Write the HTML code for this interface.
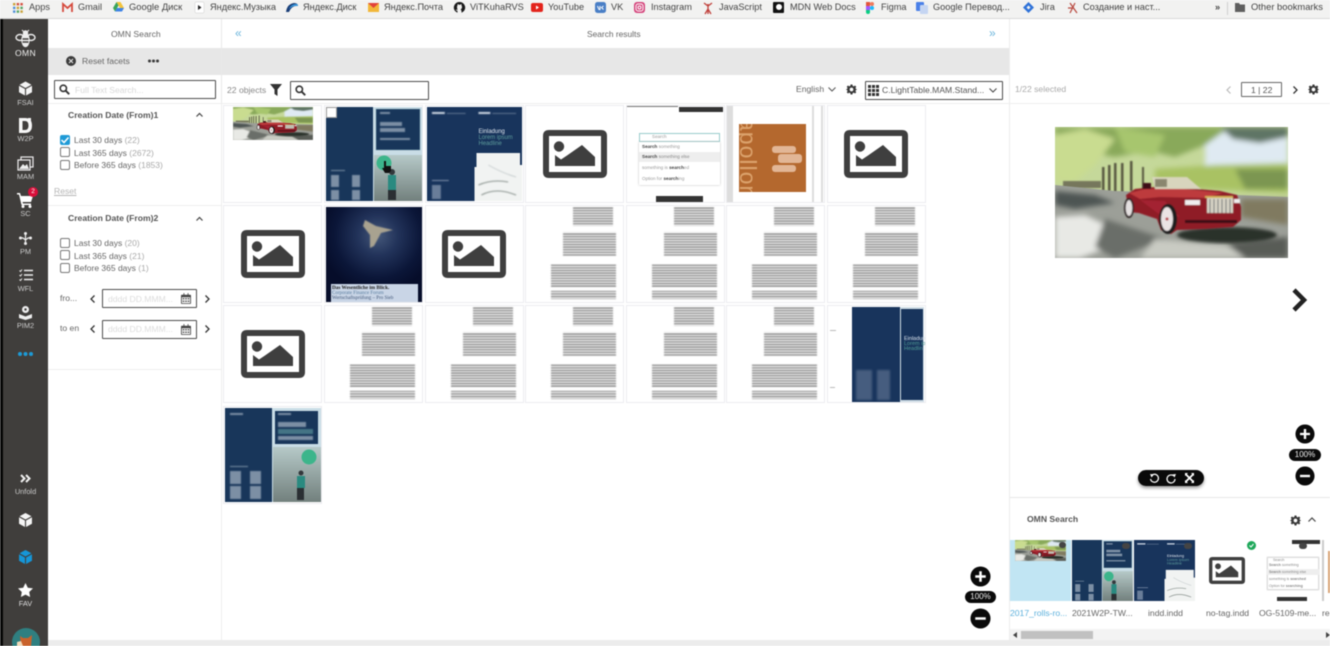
<!DOCTYPE html>
<html><head><meta charset="utf-8"><title>OMN Search</title>
<style>
html,body{margin:0;padding:0;background:#fff}
#r{position:relative;width:1330px;height:646px;overflow:hidden;background:#fff;font-family:"Liberation Sans","Noto Sans CJK SC",sans-serif;color:#555;filter:blur(.4px)}
.a,.t{position:absolute}
.t{white-space:nowrap;line-height:12px;font-size:8.6px;transform:translateY(-6px)}
.bm{font-size:9.2px;color:#444;top:7px}
.sl{color:#c9c9c9;font-size:7.4px;width:45px;left:3px;text-align:center}
.cell{position:absolute;width:99px;height:98px;box-sizing:border-box;border:1px solid #ececf0;background:#fff;overflow:hidden}
.box{position:absolute;box-sizing:border-box;border:1px solid #4c4c4c;background:#fff;border-radius:1px}
.cb{position:absolute;left:60px;width:10px;height:10px;box-sizing:border-box;border:1px solid #777;border-radius:2px;background:#fff}
.lb{left:74px;color:#666;font-size:8.5px}
.lb i{font-style:normal;color:#aaa}
.hd{color:#555;font-weight:bold;left:68px;font-size:8.6px}
svg{position:absolute;overflow:visible}
</style></head><body><div id="r">
<svg width="0" height="0" style="position:absolute">
<defs>
<filter id="b1"><feGaussianBlur stdDeviation="1.6"/></filter>
<filter id="b2"><feGaussianBlur stdDeviation=".5"/></filter>
<filter id="b3"><feGaussianBlur stdDeviation="2.6"/></filter>
<pattern id="ln" width="6" height="2.6" patternUnits="userSpaceOnUse"><rect width="6" height="1" fill="#555"/></pattern>
<radialGradient id="fal" cx=".54" cy=".3" r=".6"><stop offset="0" stop-color="#45587a"/><stop offset=".35" stop-color="#22335a"/><stop offset=".75" stop-color="#0b1638"/><stop offset="1" stop-color="#060d2a"/></radialGradient>
<linearGradient id="mt" x1="0" y1="0" x2="0" y2="1"><stop offset="0" stop-color="#b6c9c8"/><stop offset="1" stop-color="#72807d"/></linearGradient>
<symbol id="ico" viewBox="0 0 64 48"><path fill-rule="evenodd" fill="#3f3f3f" d="M6 0H58Q64 0 64 6V42Q64 48 58 48H6Q0 48 0 42V6Q0 0 6 0ZM6 6V42H58V6Z"/><circle cx="16" cy="16.5" r="5.2" fill="#3f3f3f"/><path fill="#3f3f3f" d="M12 36V25L18 29.5 24 25.5 39 15 52 27V36Z"/></symbol>
<symbol id="car" viewBox="0 0 233 131" preserveAspectRatio="none">
<rect width="233" height="131" fill="#c5d89a"/>
<g filter="url(#b3)">
<rect x="150" y="0" width="83" height="42" fill="#dfeaf2"/>
<path fill="#89a95a" d="M0 0H175L150 18 120 30 95 24 60 30 30 25 0 20Z"/>
<path fill="#c9dc90" d="M0 8 30 2 60 12 40 38 20 55H0Z"/>
<path fill="#a7c66e" d="M60 0 110 8 100 30 70 25Z"/>
<path fill="#5f7565" d="M165 0H233V10L205 16 178 12Z"/>
<path fill="#a9c263" d="M100 42 160 38 233 36V66L100 60Z"/>
<path fill="#7b9651" d="M180 42H233V62H190Z"/>
</g>
<g filter="url(#b2)" fill="#56573f"><rect x="47" y="40" width="2.500" height="24"/><rect x="53" y="38" width="2.500" height="26"/><rect x="59" y="36" width="2.500" height="30"/><rect x="66" y="36" width="2.500" height="30"/><rect x="75" y="34" width="2.500" height="30"/><rect x="87" y="40" width="2" height="24"/><rect x="8" y="54" width="38" height="7" fill="#76775c"/></g>
<path fill="#9c9f98" d="M0 58 60 64 130 66 233 70V131H0Z"/>
<g filter="url(#b3)">
<path fill="#807a61" d="M186 72H233V98L186 90Z"/>
<path fill="#e8e9e5" d="M0 90 30 88 55 100 50 122 25 131H0Z"/>
<path fill="#4e5452" d="M0 64 40 68 60 76 20 82 0 78Z"/>
<path fill="#6a6e69" d="M50 92 110 112 60 131 40 120Z"/>
<path fill="#c9cbc3" d="M100 112 190 120 233 131H85Z"/>
<path fill="#595c56" d="M170 116 233 110V131H190Z"/>
</g>
<ellipse cx="172" cy="108" rx="50" ry="8" fill="#2b302b" filter="url(#b1)"/>
<g filter="url(#b2)">
<path fill="#8f1b27" d="M71 68 80 62 100 60 130 61 165 64 182 68 186 80 186 93 178 100 150 102 122 103 116 107 106 103 102 92 84 86 74 85Z"/>
<path fill="#bd3a3c" d="M74 66 90 62 130 62 168 66 150 71 105 70 85 72Z"/>
<path fill="#a32230" d="M85 73 110 74 125 90 105 88Z"/>
<path fill="#d8d5bd" d="M97 50H132L146 62H100Z"/>
<path fill="#89866e" d="M100 52H112V60H100Z"/>
<rect x="88" y="56" width="8" height="6" fill="#3d1014"/>
<path fill="#d9d6c8" d="M152 71H178V86H152Z"/>
<path stroke="#6d6d6d" stroke-width="1.100" d="M155 72V86M159 72V86M163 72V86M167 72V86M171 72V86M175 72V86"/>
<rect x="150" y="69" width="28" height="2" fill="#d5b456"/>
<rect x="130" y="73" width="15" height="5" fill="#f0eeee"/>
<rect x="179" y="72" width="6" height="4" fill="#f0eeee"/>
<rect x="130" y="93" width="52" height="3" fill="#3a1014"/>
<ellipse cx="74" cy="81" rx="5" ry="10" fill="#2a2020"/><ellipse cx="74" cy="81" rx="3.400" ry="8" fill="#e4e0e0"/>
<ellipse cx="113" cy="92" rx="9" ry="15" fill="#1d1a1a"/><ellipse cx="112" cy="92" rx="6" ry="12" fill="#eae3e3"/><circle cx="112" cy="92" r="1.500" fill="#b3303a"/>
</g>
</symbol>
<symbol id="doc" viewBox="0 0 99 98"><g fill="url(#ln)" filter="url(#b2)"><rect x="48" y="2" width="40" height="19"/><rect x="38" y="27" width="53" height="25"/><rect x="26" y="59" width="65" height="23"/><rect x="26" y="86" width="65" height="8"/></g></symbol>
<symbol id="leg" viewBox="0 0 96 94" preserveAspectRatio="none"><rect width="96" height="94" fill="#c9dde6"/><rect width="47" height="94" fill="#18365a"/><rect x="50" y="2" width="44" height="41" fill="#18365a" stroke="#7ea0b0" stroke-width=".5"/><rect x="48" y="48" width="48" height="46" fill="url(#mt)"/><circle cx="58" cy="56" r="7.500" fill="#3cb58b"/><path fill="#2a8a80" d="M62 68H70V83H62Z"/><path fill="#2a2f33" d="M62 83H70V93H62Z"/><circle cx="66" cy="65" r="3" fill="#33383c"/><g fill="#dfe7ee" filter="url(#b2)" opacity=".5"><rect x="5" y="63" width="14" height="1"/><rect x="5" y="68" width="8" height="12"/><rect x="26" y="68" width="8" height="12"/><rect x="5" y="83" width="8" height="10"/><rect x="26" y="83" width="8" height="10"/><rect x="54" y="15" width="22" height="4"/><rect x="54" y="21" width="25" height="4"/><rect x="54" y="31" width="30" height="2"/><rect x="54" y="5" width="10" height="2"/></g></symbol>
<symbol id="leg2" viewBox="0 0 96 94" preserveAspectRatio="none"><rect width="96" height="94" fill="#c9dde6"/><rect width="47" height="94" fill="#18365a"/><rect x="50" y="3" width="43" height="33" fill="#18365a"/><rect x="48" y="39" width="48" height="55" fill="url(#mt)"/><circle cx="84" cy="49" r="7.500" fill="#3cb58b"/><path fill="#2a8a80" d="M72 68H80V80H72Z"/><path fill="#2a2f33" d="M72 80H79V92H72Z"/><circle cx="76" cy="65" r="2.500" fill="#33383c"/><g fill="#dfe7ee" filter="url(#b2)" opacity=".5"><rect x="5" y="5" width="13" height="2"/><rect x="53" y="5" width="13" height="2"/><rect x="5" y="58" width="18" height="1"/><rect x="5" y="63" width="11" height="13"/><rect x="25" y="63" width="11" height="13"/><rect x="5" y="78" width="11" height="13"/><rect x="25" y="78" width="11" height="13"/><rect x="53" y="14" width="28" height="5"/><rect x="53" y="21" width="35" height="5" fill="#6fb3b0"/><rect x="53" y="28" width="35" height="4"/></g></symbol>
<symbol id="d2" viewBox="0 0 96 94" preserveAspectRatio="none"><rect width="96" height="94" fill="#18345c"/><g fill="#cdd6e2" filter="url(#b2)"><rect x="5" y="5" width="13" height="2"/><rect x="52" y="5" width="12" height="2"/><rect x="20" y="6" width="19" height=".8" opacity=".5"/><rect x="66" y="6" width="24" height=".8" opacity=".5"/><rect x="5" y="73" width="17" height="1" opacity=".6"/><rect x="5" y="78" width="9" height="14" opacity=".45"/></g><text x="52" y="26" font-size="6" fill="#dfe6ee">Einladung</text><text x="52" y="32" font-size="6" fill="#5d9b9b">Lorem ipsum</text><text x="52" y="38" font-size="6" fill="#5d9b9b">Headline</text><path fill="#f1f3f2" d="M48 60H50V46H94V58H96V94H48Z"/><g filter="url(#b2)" fill="none" stroke="#8b9490"><path d="M55 88Q70 80 90 88"/><path d="M52 78Q66 72 82 75"/><path d="M62 58Q76 66 90 70" stroke="#c9cfd0"/></g></symbol>
<symbol id="gear" viewBox="0 0 24 24"><path fill="#3a3a3a" d="M10 1H14L14.6 4.1 17 5.1 19.6 3.3 22.4 6.1 20.6 8.7 21.7 11 24 11.6V12.4L21.7 13 20.6 15.3 22.4 17.9 19.6 20.7 17 18.9 14.6 19.9 14 23H10L9.4 19.9 7 18.9 4.4 20.7 1.6 17.9 3.4 15.3 2.3 13 0 12.4V11.6L2.3 11 3.4 8.7 1.6 6.1 4.4 3.3 7 5.1 9.4 4.1ZM12 8A4 4 0 1 0 12 16 4 4 0 0 0 12 8Z" fill-rule="evenodd"/></symbol>
<symbol id="cube" viewBox="0 0 24 26"><path fill="currentColor" d="M12 0 23 6 12 12 1 6ZM0 8 11 14V26L0 20ZM24 8 13 14V26L24 20Z"/></symbol>
<symbol id="mag" viewBox="0 0 14 14"><circle cx="5.5" cy="5.5" r="4" fill="none" stroke="#333" stroke-width="2"/><path d="M8.5 8.5 13 13" stroke="#333" stroke-width="2.4"/></symbol>
<symbol id="cal" viewBox="0 0 12 13"><path fill-rule="evenodd" fill="#444" d="M1 2H3V0H4V2H8V0H9V2H11Q12 2 12 3V12Q12 13 11 13H1Q0 13 0 12V3Q0 2 1 2ZM1 5V12H11V5Z"/><path fill="#444" d="M2 6H4V7.5H2ZM5 6H7V7.5H5ZM8 6H10V7.5H8ZM2 9H4V10.5H2ZM5 9H7V10.5H5ZM8 9H10V10.5H8Z"/></symbol>
<symbol id="plus" viewBox="0 0 22 22"><circle cx="11" cy="11" r="10.5" fill="#0a0a0a"/><path d="M5.5 11H16.5M11 5.5V16.5" stroke="#fff" stroke-width="2.6"/></symbol>
<symbol id="minus" viewBox="0 0 22 22"><circle cx="11" cy="11" r="10.5" fill="#0a0a0a"/><path d="M5.5 11H16.5" stroke="#fff" stroke-width="2.6"/></symbol>
</defs></svg>

<!-- bookmarks bar -->
<div class="a" style="left:0;top:0;width:1330px;height:18px;background:#f2f2f1;border-bottom:1px solid #d9d9d9"></div>
<svg style="left:13px;top:3px" width="10" height="10" viewBox="0 0 10 10"><g fill="#c9a33a"><rect width="2.4" height="2.4"/><rect x="3.7" width="2.4" height="2.4" fill="#d5503f"/><rect x="7.4" width="2.4" height="2.4" fill="#d5503f"/><rect y="3.7" width="2.4" height="2.4" fill="#4f8fd8"/><rect x="3.7" y="3.7" width="2.4" height="2.4"/><rect x="7.4" y="3.7" width="2.4" height="2.4" fill="#55a565"/><rect y="7.4" width="2.4" height="2.4" fill="#4f8fd8"/><rect x="3.7" y="7.4" width="2.4" height="2.4" fill="#55a565"/><rect x="7.4" y="7.4" width="2.4" height="2.4"/></g></svg>
<span class="t bm" style="left:29px">Apps</span>
<svg style="left:62px;top:3px" width="11" height="9" viewBox="0 0 11 9"><path d="M1 9V1L5.500 5 10 1V9" fill="none" stroke="#d5493c" stroke-width="1.800"/></svg>
<span class="t bm" style="left:78px">Gmail</span>
<svg style="left:113px;top:2px" width="11" height="10" viewBox="0 0 11 10"><path fill="#f3c33a" d="M3.500 0H7.500L11 6H7Z"/><path fill="#3aa55a" d="M3.500 0 0 6 2 9.500 5.500 3.500Z"/><path fill="#3f83e6" d="M2 9.500H9L11 6H4Z"/></svg>
<span class="t bm" style="left:129px;font-size:9.400px">Google Диск</span>
<svg style="left:195px;top:2px" width="9" height="11" viewBox="0 0 9 11"><rect width="9" height="11" rx="1" fill="#fff" stroke="#ccc" stroke-width=".5"/><path d="M3 3 6.500 5.500 3 8Z" fill="#222"/></svg>
<span class="t bm" style="left:210px">Яндекс.Музыка</span>
<svg style="left:286px;top:3px" width="12" height="9" viewBox="0 0 12 9"><path fill="#1b3f78" d="M0 9Q1 1 8 0 12 0 12 3 6 2 3 9Z"/><path fill="#39a0e8" d="M3 6Q5 1 11 1 12 2 12 3 7 2 3 6Z"/></svg>
<span class="t bm" style="left:303px">Яндекс.Диск</span>
<svg style="left:368px;top:3px" width="11" height="9" viewBox="0 0 11 9"><rect width="11" height="9" fill="#f2b73a"/><path d="M0 0 5.500 5 11 0Z" fill="#e2423a"/></svg>
<span class="t bm" style="left:384px">Яндекс.Почта</span>
<svg style="left:454px;top:2px" width="11" height="11" viewBox="0 0 11 11"><path fill="#1a1a1a" fill-rule="evenodd" d="M5.500 0A5.500 5.500 0 0 0 3.500 10.700V8.800Q2 8.800 1.800 7.500 3 7.800 3.600 8 3 6 3 5 3 4 3.500 3.500V2L5 2.700H6L7.500 2V3.500Q8 4 8 5 8 6.800 6.500 7.500 7.500 8 7.500 9V10.700A5.500 5.500 0 0 0 5.500 0Z"/></svg>
<span class="t bm" style="left:470px">ViTKuhaRVS</span>
<svg style="left:531px;top:3px" width="12" height="9" viewBox="0 0 12 9"><rect width="12" height="9" rx="2" fill="#e3241c"/><path d="M5 2.500 8 4.500 5 6.500Z" fill="#fff"/></svg>
<span class="t bm" style="left:548px">YouTube</span>
<svg style="left:595px;top:2px" width="11" height="11" viewBox="0 0 11 11"><rect width="11" height="11" rx="2.500" fill="#4a7fc6"/><path d="M2.500 4 4 7.500H5V4M8.500 4 6.500 5.500 8.500 7.500" stroke="#fff" fill="none"/></svg>
<span class="t bm" style="left:611px">VK</span>
<svg style="left:634px;top:2px" width="11" height="11" viewBox="0 0 11 11"><rect width="11" height="11" rx="3" fill="#d4457c"/><rect x="2" y="2" width="7" height="7" rx="2" fill="none" stroke="#fff"/><circle cx="5.500" cy="5.500" r="1.500" fill="none" stroke="#fff"/></svg>
<span class="t bm" style="left:651px">Instagram</span>
<svg style="left:703px;top:2px" width="10" height="12" viewBox="0 0 10 12"><path d="M5 2V12M2 12 5 7 8 12M1 1 5 4 9 1" stroke="#c0413c" fill="none" stroke-width="1.300"/></svg>
<span class="t bm" style="left:719px">JavaScript</span>
<div class="a" style="left:773px;top:2px;width:11px;height:11px;background:#111;border-radius:1px"></div>
<div class="a" style="left:776px;top:4px;width:6px;height:6px;background:#fff;border-radius:50%"></div>
<span class="t bm" style="left:790px">MDN Web Docs</span>
<svg style="left:866px;top:2px" width="8" height="12" viewBox="0 0 8 12"><rect width="4" height="4" fill="#e2553c"/><rect x="4" width="4" height="4" rx="2" fill="#f07a5c"/><rect y="4" width="4" height="4" fill="#a259ff"/><circle cx="6" cy="6" r="2" fill="#1abcfe"/><path d="M0 8H4V10A2 2 0 0 1 0 10Z" fill="#0acf83"/></svg>
<span class="t bm" style="left:881px">Figma</span>
<svg style="left:916px;top:2px" width="12" height="12" viewBox="0 0 12 12"><rect width="8" height="9" rx="1" fill="#4a80e8"/><rect x="4" y="3" width="8" height="9" rx="1" fill="#c5d5f2"/></svg>
<span class="t bm" style="left:933px">Google Перевод...</span>
<svg style="left:1023px;top:2px" width="11" height="11" viewBox="0 0 11 11"><path fill="#2f72d8" fill-rule="evenodd" d="M5.500 0 11 5.500 5.500 11 0 5.500ZM5.500 3.500 3.500 5.500 5.500 7.500 7.500 5.500Z"/></svg>
<span class="t bm" style="left:1040px">Jira</span>
<svg style="left:1068px;top:2px" width="11" height="12" viewBox="0 0 11 12"><path d="M2 1 9 11M7 1 2 11M0 6H5" stroke="#b8483f" fill="none" stroke-width="1.200"/></svg>
<span class="t bm" style="left:1083px">Создание и наст...</span>
<span class="t bm" style="left:1215px;font-weight:bold">»</span>
<div class="a" style="left:1227px;top:2px;width:1px;height:13px;background:#cfcfcf"></div>
<svg style="left:1235px;top:3px" width="10" height="9" viewBox="0 0 10 9"><path fill="#5f5f5f" d="M0 0H4L5 1.500H10V9H0Z"/></svg>
<span class="t bm" style="left:1251px;font-size:9.400px">Other bookmarks</span>

<!-- sidebar -->
<div class="a" style="left:0;top:19px;width:3px;height:627px;background:#060606"></div>
<div class="a" style="left:3px;top:19px;width:45px;height:627px;background:#403e3c"></div>
<svg style="left:15px;top:30px" width="21" height="19" viewBox="0 0 21 19" fill="none" stroke="#eee" stroke-width="1.400"><ellipse cx="5" cy="7.500" rx="4" ry="3"/><ellipse cx="16" cy="7.500" rx="4" ry="3"/><ellipse cx="10.500" cy="10" rx="3.500" ry="6.500" fill="#eee"/><circle cx="10.500" cy="3" r="2" fill="#eee"/><path d="M7 0 9 2M14 0 12 2" stroke-width="1"/><path d="M7.500 9H13.500M7.500 12H13.500" stroke="#403e3c"/></svg>
<span class="t sl" style="top:53px;color:#eee;font-size:8.6px;letter-spacing:.3px">OMN</span>
<svg style="left:19px;top:81px;color:#f4f4f4" width="13" height="15"><use href="#cube"/></svg>
<span class="t sl" style="top:103px">FSAI</span>
<svg style="left:19px;top:118px" width="13" height="15" viewBox="0 0 13 15"><path fill-rule="evenodd" fill="#f6f6f6" d="M0 0H6Q13 0 13 7.500 13 15 6 15H0ZM3.500 3V12H6Q9.500 12 9.500 7.500 9.500 3 6 3Z"/><rect x="9" y="0" width="3" height="3" fill="#f6f6f6"/></svg>
<span class="t sl" style="top:139px">W2P</span>
<svg style="left:18px;top:157px" width="15" height="13" viewBox="0 0 15 13"><rect x="3" y="0" width="12" height="10" fill="none" stroke="#eee" stroke-width="1.200"/><rect x="0" y="3" width="12" height="10" fill="#403e3c" stroke="#eee" stroke-width="1.200"/><path fill="#eee" d="M1 12 5 7 7 9 9 7 11 12Z"/></svg>
<span class="t sl" style="top:177px">MAM</span>
<svg style="left:17px;top:193px" width="16" height="15" viewBox="0 0 16 15"><path fill="#fff" d="M0 0H3L4 3H16L14 9H5.500L6 10.500H14V12H4.500L2 1.500H0Z"/><circle cx="6" cy="13.500" r="1.500" fill="#fff"/><circle cx="13" cy="13.500" r="1.500" fill="#fff"/></svg>
<div class="a" style="left:28px;top:187px;width:10px;height:10px;background:#d80f3a;border-radius:50%;color:#fff;font-size:6.500px;line-height:10px;text-align:center">2</div>
<span class="t sl" style="top:214px">SC</span>
<svg style="left:19px;top:232px" width="13" height="13" viewBox="0 0 13 13"><g stroke="#eee" stroke-width="1.200" fill="none"><path d="M6.500 2V11M1.500 6H4L6.500 8 9 6H11.500"/></g><g fill="#eee"><circle cx="6.500" cy="1.500" r="1.500"/><circle cx="1.500" cy="6" r="1.500"/><circle cx="11.500" cy="6" r="1.500"/><circle cx="6.500" cy="11.500" r="1.500"/></g></svg>
<span class="t sl" style="top:252px">PM</span>
<svg style="left:19px;top:269px" width="14" height="12" viewBox="0 0 14 12"><g stroke="#eee" stroke-width="1.500" fill="none"><path d="M5 1.500H14M5 6H14M5 10.500H14"/><path d="M.5 1.500 1.500 2.500 3 .5M.5 6 1.500 7 3 5M.5 10.500 1.500 11.500 3 9.500" stroke-width="1"/></g></svg>
<span class="t sl" style="top:289px">WFL</span>
<svg style="left:19px;top:306px" width="13" height="14" viewBox="0 0 13 14"><circle cx="6.500" cy="3.500" r="3.500" fill="#eee"/><path fill="#eee" d="M0 8 6.500 10.500 13 8V12L6.500 14 0 12Z"/><circle cx="6.500" cy="3.500" r="1.200" fill="#403e3c"/></svg>
<span class="t sl" style="top:326px">PIM2</span>
<svg style="left:18px;top:352px" width="15" height="4" viewBox="0 0 15 4"><g fill="#1d9ad6"><circle cx="2" cy="2" r="2"/><circle cx="7.500" cy="2" r="2"/><circle cx="13" cy="2" r="2"/></g></svg>
<svg style="left:20px;top:474px" width="11" height="9" viewBox="0 0 11 9"><path d="M1 1 4.500 4.500 1 8M6 1 9.500 4.500 6 8" fill="none" stroke="#f2f2f2" stroke-width="2"/></svg>
<span class="t sl" style="top:492px">Unfold</span>
<svg style="left:19px;top:513px;color:#f4f4f4" width="13" height="14"><use href="#cube"/></svg>
<svg style="left:19px;top:550px;color:#1596d8" width="13" height="14"><use href="#cube"/></svg>
<svg style="left:18px;top:583px" width="15" height="14" viewBox="0 0 15 14"><path fill="#fff" d="M7.500 0 9.800 4.700 15 5.400 11.200 9 12.100 14 7.500 11.600 2.900 14 3.800 9 0 5.400 5.200 4.700Z"/></svg>
<span class="t sl" style="top:604px;color:#ddd">FAV</span>
<div class="a" style="left:12px;top:628px;width:28px;height:28px;background:#2f7f80;border-radius:50%"></div>
<svg style="left:17px;top:634px" width="18" height="12" viewBox="0 0 18 12"><path fill="#c9622c" d="M3 2 6 4H11L15 1 14 12H4Z"/><path fill="#f0d9b8" d="M0 12V8L4 7 6 12Z"/></svg>

<!-- headers -->
<span class="t" style="left:111px;top:34px;color:#666">OMN Search</span>
<span class="t" style="left:587px;top:34px;color:#666;font-size:8.400px">Search results</span>
<span class="t" style="left:235px;top:33px;color:#6cb5dc;font-size:12px">«</span>
<span class="t" style="left:989px;top:33px;color:#6cb5dc;font-size:12px">»</span>
<div class="a" style="left:48px;top:48px;width:962px;height:27px;background:#e7e7e7"></div>
<div class="a" style="left:221px;top:19px;width:1px;height:84px;background:#e8e8e8"></div>
<div class="a" style="left:1009px;top:19px;width:1px;height:621px;background:#ececec"></div>
<div class="a" style="left:48px;top:103px;width:1282px;height:1px;background:#eee"></div>
<div class="a" style="left:221px;top:103px;width:1px;height:537px;background:#eee"></div>

<!-- left panel -->
<div class="a" style="left:66px;top:56px;width:10px;height:10px;border-radius:50%;background:#3c3c3c"></div>
<svg style="left:69px;top:59px" width="4" height="4" viewBox="0 0 4 4"><path d="M0 0 4 4M4 0 0 4" stroke="#eee"/></svg>
<span class="t" style="left:82px;top:61px;color:#666">Reset facets</span>
<svg style="left:148px;top:59px" width="11" height="4" viewBox="0 0 11 4"><g fill="#3a3a3a"><circle cx="1.500" cy="2" r="1.500"/><circle cx="5.500" cy="2" r="1.500"/><circle cx="9.500" cy="2" r="1.500"/></g></svg>
<div class="box" style="left:54px;top:80px;width:162px;height:19px"></div>
<svg style="left:59px;top:84px" width="11" height="11"><use href="#mag"/></svg>
<span class="t" style="left:75px;top:90px;color:#d8d8d8">Full Text Search...</span>

<span class="t hd" style="top:115px">Creation Date (From)1</span>
<svg style="left:196px;top:113px" width="7" height="4" viewBox="0 0 7 4"><path d="M.5 3.500 3.500 .5 6.500 3.500" fill="none" stroke="#444" stroke-width="1.200"/></svg>
<div class="cb" style="top:135px;background:#1f9ad6;border-color:#1f9ad6"></div>
<svg style="left:61px;top:137px" width="8" height="6" viewBox="0 0 8 6"><path d="M.5 3 3 5.500 7.500 .5" fill="none" stroke="#fff" stroke-width="1.500"/></svg>
<span class="t lb" style="top:140px">Last 30 days <i>(22)</i></span>
<div class="cb" style="top:147px"></div>
<span class="t lb" style="top:153px">Last 365 days <i>(2672)</i></span>
<div class="cb" style="top:160px"></div>
<span class="t lb" style="top:165px">Before 365 days <i>(1853)</i></span>
<span class="t" style="left:54px;top:191px;color:#b5b5b5;text-decoration:underline">Reset</span>
<div class="a" style="left:48px;top:205px;width:173px;height:1px;background:#eee"></div>

<span class="t hd" style="top:218px">Creation Date (From)2</span>
<svg style="left:196px;top:217px" width="7" height="4" viewBox="0 0 7 4"><path d="M.5 3.500 3.500 .5 6.500 3.500" fill="none" stroke="#444" stroke-width="1.200"/></svg>
<div class="cb" style="top:238px"></div>
<span class="t lb" style="top:243px">Last 30 days <i>(20)</i></span>
<div class="cb" style="top:250px"></div>
<span class="t lb" style="top:256px">Last 365 days <i>(21)</i></span>
<div class="cb" style="top:263px"></div>
<span class="t lb" style="top:268px">Before 365 days <i>(1)</i></span>
<span class="t" style="left:60px;top:298px;color:#666">fro...</span>
<svg style="left:90px;top:295px" width="5" height="8" viewBox="0 0 5 8"><path d="M4.500 .5 1 4 4.500 7.500" fill="none" stroke="#333" stroke-width="1.300"/></svg>
<div class="box" style="left:102px;top:289px;width:95px;height:19px"></div>
<span class="t" style="left:108px;top:299px;color:#ddd">dddd DD.MMM...</span>
<svg style="left:181px;top:293px" width="10" height="11"><use href="#cal"/></svg>
<svg style="left:205px;top:295px" width="5" height="8" viewBox="0 0 5 8"><path d="M.5 .5 4 4 .5 7.500" fill="none" stroke="#333" stroke-width="1.300"/></svg>
<span class="t" style="left:60px;top:328px;color:#666">to en</span>
<svg style="left:90px;top:325px" width="5" height="8" viewBox="0 0 5 8"><path d="M4.500 .5 1 4 4.500 7.500" fill="none" stroke="#333" stroke-width="1.300"/></svg>
<div class="box" style="left:102px;top:320px;width:95px;height:19px"></div>
<span class="t" style="left:108px;top:329px;color:#ddd">dddd DD.MMM...</span>
<svg style="left:181px;top:324px" width="10" height="11"><use href="#cal"/></svg>
<svg style="left:205px;top:325px" width="5" height="8" viewBox="0 0 5 8"><path d="M.5 .5 4 4 .5 7.500" fill="none" stroke="#333" stroke-width="1.300"/></svg>
<div class="a" style="left:48px;top:369px;width:173px;height:1px;background:#eee"></div>

<!-- toolbar -->
<span class="t" style="left:227px;top:90px;color:#888">22 objects</span>
<svg style="left:270px;top:84px" width="12" height="12" viewBox="0 0 12 12"><path fill="#333" d="M0 0H12L7.500 5.500V12L4.500 10V5.500Z"/></svg>
<div class="box" style="left:290px;top:81px;width:139px;height:19px"></div>
<svg style="left:295px;top:85px" width="11" height="11"><use href="#mag"/></svg>
<span class="t" style="left:796px;top:89px;color:#666">English</span>
<svg style="left:828px;top:87px" width="8" height="5" viewBox="0 0 8 5"><path d="M.5 .5 4 4 7.500 .5" fill="none" stroke="#555" stroke-width="1"/></svg>
<svg style="left:846px;top:84px" width="11" height="11"><use href="#gear"/></svg>
<div class="box" style="left:865px;top:81px;width:138px;height:19px"></div>
<svg style="left:868px;top:85px" width="11" height="11" viewBox="0 0 11 11"><g fill="#333"><rect width="3" height="3"/><rect x="4" width="3" height="3"/><rect x="8" width="3" height="3"/><rect y="4" width="3" height="3"/><rect x="4" y="4" width="3" height="3"/><rect x="8" y="4" width="3" height="3"/><rect y="8" width="3" height="3"/><rect x="4" y="8" width="3" height="3"/><rect x="8" y="8" width="3" height="3"/></g></svg>
<span class="t" style="left:882px;top:90px;color:#555">C.LightTable.MAM.Stand...</span>
<svg style="left:989px;top:88px" width="8" height="5" viewBox="0 0 8 5"><path d="M.5 .5 4 4 7.500 .5" fill="none" stroke="#444" stroke-width="1"/></svg>
<span class="t" style="left:1015px;top:89px;color:#aaa">1/22 selected</span>
<svg style="left:1226px;top:86px" width="5" height="8" viewBox="0 0 5 8"><path d="M4.500 .5 1 4 4.500 7.500" fill="none" stroke="#bbb" stroke-width="1.200"/></svg>
<div class="box" style="left:1241px;top:82px;width:41px;height:15px;border-color:#666"></div>
<span class="t" style="left:1251px;top:90px;color:#555">1 | 22</span>
<svg style="left:1293px;top:86px" width="5" height="8" viewBox="0 0 5 8"><path d="M.5 .5 4 4 .5 7.500" fill="none" stroke="#333" stroke-width="1.300"/></svg>
<svg style="left:1308px;top:84px" width="11" height="11"><use href="#gear"/></svg>

<!-- grid row 1 -->
<div class="cell" style="left:223px;top:105px"><svg style="left:9px;top:1px" width="80" height="33"><use href="#car" width="80" height="33"/></svg></div>
<div class="cell" style="left:324px;top:105px"><svg style="left:1px;top:1px" width="96" height="94"><use href="#leg" width="96" height="94"/></svg><div class="a" style="left:1px;top:1px;width:9px;height:9px;background:#fff;border:1px solid #999"></div></div>
<svg style="left:382px;top:161px" width="9" height="12" viewBox="0 0 9 12"><path fill="#111" d="M2 0H4V5H9V10L7 12H3L0 7 2 7Z"/></svg>
<div class="cell" style="left:425px;top:105px"><svg style="left:1px;top:1px" width="95" height="94"><use href="#d2" width="95" height="94"/></svg></div>
<div class="cell" style="left:525px;top:105px"><svg style="left:17px;top:24px" width="64" height="48"><use href="#ico"/></svg></div>
<div class="cell" style="left:626px;top:105px">
 <div class="a" style="left:0;top:0;width:51px;height:1px;background:#777"></div>
 <div class="a" style="left:52px;top:1px;width:44px;height:5px;background:#333"></div>
 <div class="a" style="left:12px;top:27px;width:81px;height:9px;box-sizing:border-box;border:1px solid #9cc;background:#fff"></div>
 <span class="t" style="left:25px;top:31px;font-size:4.600px;color:#999">Search</span>
 <div class="a" style="left:12px;top:36px;width:81px;height:43px;background:#fff;box-shadow:0 0 2px #bbb"></div>
 <div class="a" style="left:12px;top:46px;width:81px;height:10px;background:#eee"></div>
 <span class="t" style="left:15px;top:41px;font-size:4.600px;color:#999"><b style="color:#444">Search</b> something</span>
 <span class="t" style="left:15px;top:51px;font-size:4.600px;color:#888"><b style="color:#444">Search</b> something else</span>
 <span class="t" style="left:15px;top:62px;font-size:4.600px;color:#999">something is <b style="color:#444">search</b>ed</span>
 <span class="t" style="left:15px;top:73px;font-size:4.600px;color:#999">Option for <b style="color:#444">search</b>ing</span>
 <div class="a" style="left:29px;top:90px;width:47px;height:8px;background:#333"></div>
</div>
<div class="cell" style="left:726px;top:105px">
 <div class="a" style="left:0;top:0;width:6px;height:96px;background:#ddd"></div>
 <div class="a" style="left:85px;top:0;width:2px;height:96px;background:#ddd"></div>
 <div class="a" style="left:94px;top:0;width:2px;height:96px;background:#ddd"></div>
 <div class="a" style="left:12px;top:18px;width:67px;height:68px;background:#b4682e;overflow:hidden">
  <span class="a" style="left:-3px;top:-6px;writing-mode:vertical-rl;font-size:23px;line-height:24px;color:#dba26c;letter-spacing:1px;white-space:nowrap">apollon</span>
  <div class="a" style="left:33px;top:22px;width:24px;height:7px;background:#e2b696;border-radius:3px"></div>
  <div class="a" style="left:39px;top:30px;width:24px;height:9px;background:#e2b696;border-radius:3px"></div>
  <div class="a" style="left:33px;top:41px;width:24px;height:7px;background:#e2b696;border-radius:3px"></div>
 </div>
</div>
<div class="cell" style="left:827px;top:105px"><svg style="left:16px;top:24px" width="64" height="48"><use href="#ico"/></svg></div>

<!-- row 2 -->
<div class="cell" style="left:223px;top:205px"><svg style="left:17px;top:24px" width="64" height="48"><use href="#ico"/></svg></div>
<div class="cell" style="left:324px;top:205px">
 <svg style="left:1px;top:1px" width="96" height="95" viewBox="0 0 96 95"><rect width="96" height="95" fill="url(#fal)"/><path fill="#a8a290" filter="url(#b2)" d="M39 13 50 19 67 23 55 26 48 39 44 41 44 28 37 19Z"/><rect x="5" y="77" width="87" height="18" fill="#c9d5e6"/></svg>
 <span class="t" style="left:7px;top:82px;font:bold 5.200px 'Liberation Serif',serif;color:#222;transform:none;margin-top:-3px">Das Wesentliche im Blick.</span>
 <span class="t" style="left:7px;top:88px;font:5px 'Liberation Serif',serif;color:#5a7ea0;transform:none;margin-top:-3px">Corporate Finance Forum</span>
 <span class="t" style="left:7px;top:93px;font:5px 'Liberation Serif',serif;color:#44597a;transform:none;margin-top:-3px">Wertschaftsprüfung – Pro Sieb</span>
</div>
<div class="cell" style="left:425px;top:205px"><svg style="left:16px;top:24px" width="64" height="48"><use href="#ico"/></svg></div>
<div class="cell" style="left:525px;top:205px"><svg width="99" height="98" style="left:-1px;top:-1px"><use href="#doc" width="99" height="98"/></svg></div>
<div class="cell" style="left:626px;top:205px"><svg width="99" height="98" style="left:-1px;top:-1px"><use href="#doc" width="99" height="98"/></svg></div>
<div class="cell" style="left:726px;top:205px"><svg width="99" height="98" style="left:-1px;top:-1px"><use href="#doc" width="99" height="98"/></svg></div>
<div class="cell" style="left:827px;top:205px"><svg width="99" height="98" style="left:-1px;top:-1px"><use href="#doc" width="99" height="98"/></svg></div>

<!-- row 3 -->
<div class="cell" style="left:223px;top:305px"><svg style="left:17px;top:24px" width="64" height="48"><use href="#ico"/></svg></div>
<div class="cell" style="left:324px;top:305px"><svg width="99" height="98" style="left:-1px;top:-1px"><use href="#doc" width="99" height="98"/></svg></div>
<div class="cell" style="left:425px;top:305px"><svg width="99" height="98" style="left:-1px;top:-1px"><use href="#doc" width="99" height="98"/></svg></div>
<div class="cell" style="left:525px;top:305px"><svg width="99" height="98" style="left:-1px;top:-1px"><use href="#doc" width="99" height="98"/></svg></div>
<div class="cell" style="left:626px;top:305px"><svg width="99" height="98" style="left:-1px;top:-1px"><use href="#doc" width="99" height="98"/></svg></div>
<div class="cell" style="left:726px;top:305px"><svg width="99" height="98" style="left:-1px;top:-1px"><use href="#doc" width="99" height="98"/></svg></div>
<div class="cell" style="left:827px;top:305px">
 <div class="a" style="left:24px;top:1px;width:48px;height:95px;background:#18345c"></div>
 <div class="a" style="left:72px;top:1px;width:24px;height:95px;background:#cfdde6"></div>
 <div class="a" style="left:73px;top:3px;width:22px;height:91px;background:#18345c"></div>
 <div class="a" style="left:28px;top:64px;width:16px;height:30px;background:#8b9cb3;opacity:.4;filter:blur(1px)"></div>
 <div class="a" style="left:49px;top:64px;width:13px;height:30px;background:#8b9cb3;opacity:.4;filter:blur(1px)"></div>
 <span class="t" style="left:76px;top:33px;font-size:5.500px;color:#d8e2ec">Einladun</span>
 <span class="t" style="left:76px;top:38px;font-size:5.500px;color:#4f9a94">Lorem ip</span>
 <span class="t" style="left:76px;top:43px;font-size:5.500px;color:#4f9a94">Headlin</span>
 <div class="a" style="left:2px;top:24px;width:6px;height:1px;background:#bbb"></div>
 <div class="a" style="left:2px;top:81px;width:5px;height:1px;background:#bbb"></div>
</div>

<!-- row 4 -->
<div class="cell" style="left:223px;top:406px"><svg style="left:1px;top:1px" width="96" height="94"><use href="#leg2" width="96" height="94"/></svg></div>

<!-- zoom main -->
<svg style="left:970px;top:566px" width="21" height="21"><use href="#plus"/></svg>
<div class="a" style="left:965px;top:591px;width:31px;height:12px;border-radius:6px;background:#0a0a0a;color:#eee;font-size:8px;line-height:12px;text-align:center">100%</div>
<svg style="left:970px;top:608px" width="21" height="21"><use href="#minus"/></svg>

<!-- right preview -->
<svg style="left:1055px;top:127px" width="233" height="131"><use href="#car" width="233" height="131"/></svg>
<svg style="left:1291px;top:288px" width="17" height="24" viewBox="0 0 17 24"><path d="M3 2 13 12 3 22" fill="none" stroke="#222" stroke-width="4.500"/></svg>
<svg style="left:1295px;top:424px" width="20" height="20"><use href="#plus" width="20" height="20"/></svg>
<div class="a" style="left:1289px;top:449px;width:32px;height:12px;border-radius:6px;background:#0a0a0a;color:#eee;font-size:8px;line-height:12px;text-align:center">100%</div>
<svg style="left:1295px;top:466px" width="20" height="20"><use href="#minus" width="20" height="20"/></svg>
<div class="a" style="left:1138px;top:470px;width:66px;height:16px;border-radius:8px;background:#0a0a0a;box-shadow:0 2px 3px #999"></div>
<svg style="left:1149px;top:473px" width="46" height="10" viewBox="0 0 46 10" fill="none" stroke="#fff" stroke-width="1.200"><path d="M2.500 2.500A4 4 0 1 1 1.500 6"/><path d="M1 1 5 1.500 2.500 4.500Z" fill="#fff" stroke="none"/><path d="M24 2.500A4 4 0 1 0 26 6"/><path d="M27 1 23 1.500 25.500 4.500Z" fill="#fff" stroke="none"/><path d="M37 1.500 44 8.500M44 1.500 37 8.500" stroke-width="1.800"/><path d="M36 0H39L36 3ZM45 0H42L45 3ZM36 10H39L36 7ZM45 10H42L45 7Z" fill="#fff" stroke="none"/></svg>

<!-- film strip -->
<div class="a" style="left:1010px;top:497px;width:320px;height:1px;background:#e7e7e7"></div>
<span class="t" style="left:1027px;top:519px;color:#555;font-weight:bold">OMN Search</span>
<svg style="left:1290px;top:515px" width="11" height="11"><use href="#gear"/></svg>
<svg style="left:1308px;top:517px" width="8" height="5" viewBox="0 0 8 5"><path d="M.5 4.500 4 1 7.500 4.500" fill="none" stroke="#444" stroke-width="1.200"/></svg>
<div class="a" style="left:1010px;top:540px;width:61px;height:61px;background:#c1e5f3"></div>
<svg style="left:1015px;top:540px" width="51" height="21"><use href="#car" width="51" height="21"/></svg>
<svg style="left:1072px;top:540px" width="61" height="61"><use href="#leg" width="61" height="61"/></svg>
<svg style="left:1134px;top:540px" width="61" height="61"><use href="#d2" width="61" height="61"/></svg>
<svg style="left:1209px;top:557px" width="36" height="27"><use href="#ico" width="36" height="27"/></svg>
<div class="a" style="left:1247px;top:541px;width:9px;height:9px;border-radius:50%;background:#1ea85a"></div>
<svg style="left:1249px;top:543px" width="5" height="5" viewBox="0 0 5 5"><path d="M.5 2.500 2 4 4.500 1" fill="none" stroke="#fff"/></svg>
<div class="a" style="left:1259px;top:540px;width:61px;height:61px;background:#fff;overflow:hidden">
 <div class="a" style="left:33px;top:0;width:28px;height:4px;background:#333"></div>
 <div class="a" style="left:8px;top:17px;width:52px;height:33px;border:1px solid #ddd;box-sizing:border-box;box-shadow:0 0 1px #bbb"></div>
 <div class="a" style="left:8px;top:29px;width:52px;height:6px;background:#eee"></div>
 <span class="t" style="left:14px;top:20px;font-size:3.600px;color:#888">Search</span>
 <span class="t" style="left:10px;top:25px;font-size:3.600px;color:#888"><b>Search</b> something</span>
 <span class="t" style="left:10px;top:32px;font-size:3.600px;color:#888"><b>Search</b> something else</span>
 <span class="t" style="left:10px;top:39px;font-size:3.600px;color:#888">something is <b>searched</b></span>
 <span class="t" style="left:10px;top:46px;font-size:3.600px;color:#888">Option for <b>searching</b></span>
 <div class="a" style="left:18px;top:57px;width:30px;height:4px;background:#333"></div>
</div>
<div class="a" style="left:1322px;top:540px;width:2px;height:61px;background:#ccc"></div>
<div class="a" style="left:1328px;top:551px;width:2px;height:42px;background:#d9a678"></div>
<div class="a" style="left:1059px;top:542px;width:7px;height:6px;border-radius:3px;background:#444"></div>
<div class="a" style="left:1122px;top:543px;width:8px;height:6px;border-radius:3px;background:#444"></div>
<div class="a" style="left:1184px;top:543px;width:8px;height:6px;border-radius:3px;background:#444"></div>
<div class="a" style="left:1299px;top:543px;width:8px;height:6px;border-radius:3px;background:#444"></div>
<span class="t" style="left:1010px;top:613px;color:#5cb0dc">2017_rolls-ro...</span>
<span class="t" style="left:1072px;top:613px;color:#666">2021W2P-TW...</span>
<span class="t" style="left:1148px;top:613px;color:#666">indd.indd</span>
<span class="t" style="left:1206px;top:613px;color:#666">no-tag.indd</span>
<span class="t" style="left:1259px;top:613px;color:#666">OG-5109-me...</span>
<span class="t" style="left:1322px;top:613px;color:#666">res</span>
<div class="a" style="left:1010px;top:629px;width:320px;height:11px;background:#f3f3f3"></div>
<div class="a" style="left:1021px;top:631px;width:72px;height:8px;background:#c1c1c1"></div>
<svg style="left:1013px;top:632px" width="4" height="6" viewBox="0 0 4 6"><path d="M4 0V6L0 3Z" fill="#444"/></svg>
<svg style="left:1326px;top:632px" width="4" height="6" viewBox="0 0 4 6"><path d="M0 0V6L4 3Z" fill="#444"/></svg>
<div class="a" style="left:48px;top:640px;width:1282px;height:6px;background:#ececec"></div>
</div></body></html>
